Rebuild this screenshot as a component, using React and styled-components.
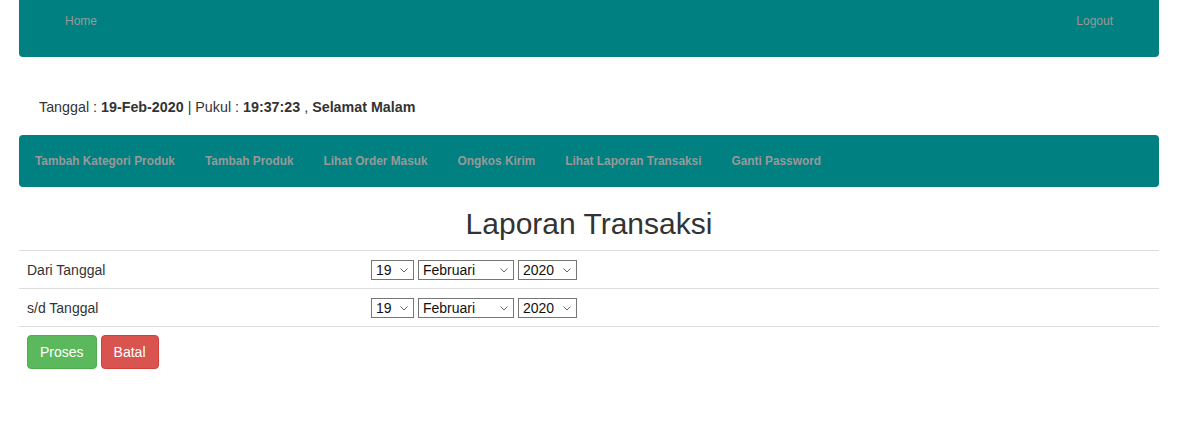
import React from 'react';
import styled, { createGlobalStyle } from 'styled-components';

const GlobalStyle = createGlobalStyle`
  body {
    margin: 0;
    background: #fff;
    color: #333;
    font-family: "Liberation Sans", Helvetica, Arial, sans-serif;
    font-size: 14px;
  }
`;

const Container = styled.div`
  width: 1140px;
  margin: 0 auto;
`;

const TopNav = styled.div`
  display: flex;
  justify-content: space-between;
  height: 57px;
  padding: 0 46px;
  background-color: #008080;
  border-radius: 0 0 4px 4px;
`;

const TopLink = styled.a`
  padding-top: 14px;
  font-size: 12px;
  line-height: 14px;
  color: #999;
  text-decoration: none;
`;

const DateLine = styled.div`
  padding: 40px 20px 0;
  font-size: 14.3px;
  line-height: 20px;
`;

const MenuBar = styled.div`
  display: flex;
  height: 52px;
  margin-top: 18px;
  padding-left: 1px;
  background-color: #008080;
  border-radius: 4px;
`;

const MenuLink = styled.a`
  padding: 0 15px;
  font-size: 11.85px;
  font-weight: bold;
  line-height: 52px;
  color: #999;
  text-decoration: none;
`;

const Title = styled.h2`
  margin: 20px 0 10px;
  font-size: 30px;
  font-weight: 500;
  line-height: 33px;
  text-align: center;
  color: #333;
`;

const Table = styled.div`
  border-bottom: 1px solid #ddd;
`;

const Row = styled.div`
  display: grid;
  grid-template-columns: 352px 1fr;
  align-items: center;
  height: 37px;
  border-top: 1px solid #ddd;
`;

const Label = styled.div`
  padding-left: 8px;
  line-height: 20px;
`;

const Selects = styled.div`
  display: flex;
  gap: 4px;
  padding-top: 1px;
`;

const SelectWrap = styled.span`
  position: relative;
  display: inline-flex;
`;

const Select = styled.select`
  width: ${props => props.$width}px;
  height: 20px;
  padding: 0 0 0 4px;
  border: 1px solid #767676;
  border-radius: 0;
  background: #fff;
  color: #111;
  font-family: "Liberation Sans", Arial, sans-serif;
  font-size: 14px;
  appearance: none;
`;

const Chevron = styled.svg`
  position: absolute;
  top: 8px;
  right: 6px;
  pointer-events: none;
`;

const Actions = styled.div`
  display: flex;
  gap: 4px;
  padding: 8px 8px 0;
`;

const Button = styled.button`
  height: 34px;
  padding: 6px 12px;
  border: 1px solid ${props => props.$border};
  border-radius: 4px;
  background-color: ${props => props.$color};
  color: #fff;
  font-family: "Liberation Sans", Arial, sans-serif;
  font-size: 14px;
  line-height: 20px;
`;

const menu = [
  'Tambah Kategori Produk',
  'Tambah Produk',
  'Lihat Order Masuk',
  'Ongkos Kirim',
  'Lihat Laporan Transaksi',
  'Ganti Password',
];

const Dropdown = ({ width, value }) => (
  <SelectWrap>
    <Select $width={width} defaultValue={value}>
      <option>{value}</option>
    </Select>
    <Chevron width="8" height="5" viewBox="0 0 8 5">
      <polyline points="0.5,0.5 4,4 7.5,0.5" fill="none" stroke="#666" strokeWidth="1" />
    </Chevron>
  </SelectWrap>
);

const DatePicker = () => (
  <Selects>
    <Dropdown width={43} value="19" />
    <Dropdown width={96} value="Februari" />
    <Dropdown width={59} value="2020" />
  </Selects>
);

const App = () => {
  return (
    <Container>
      <GlobalStyle />
      <TopNav>
        <TopLink href="#">Home</TopLink>
        <TopLink href="#">Logout</TopLink>
      </TopNav>
      <DateLine>
        Tanggal : <b>19-Feb-2020</b> | Pukul : <b>19:37:23</b> , <b>Selamat Malam</b>
      </DateLine>
      <MenuBar>
        {menu.map(item => <MenuLink key={item} href="#">{item}</MenuLink>)}
      </MenuBar>
      <Title>Laporan Transaksi</Title>
      <Table>
        <Row>
          <Label>Dari Tanggal</Label>
          <DatePicker />
        </Row>
        <Row>
          <Label>s/d Tanggal</Label>
          <DatePicker />
        </Row>
      </Table>
      <Actions>
        <Button $color="#5cb85c" $border="#4cae4c">Proses</Button>
        <Button $color="#d9534f" $border="#d43f3a">Batal</Button>
      </Actions>
    </Container>
  );
}

export default App;
